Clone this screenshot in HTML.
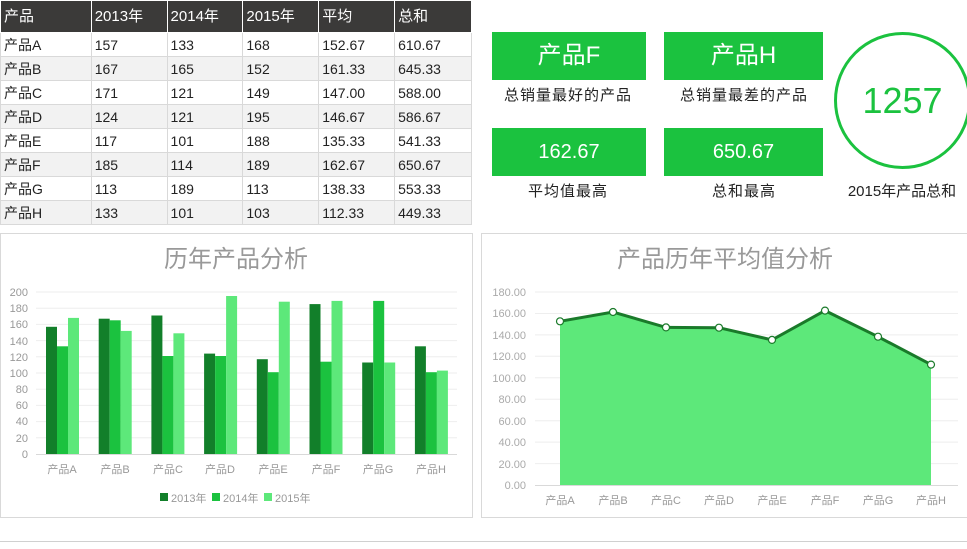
<!DOCTYPE html>
<html><head><meta charset="utf-8"><style>
*{margin:0;padding:0;box-sizing:border-box}
body{width:967px;height:549px;background:#fff;position:relative;overflow:hidden;font-family:"Liberation Sans","Noto Sans CJK SC",sans-serif}
table{position:absolute;left:0;top:0;border-collapse:collapse;width:472px}
td{height:24px;border:1px solid #d9d9d9;font-size:14px;color:#222;padding:0 0 0 3px;line-height:22px}
tr.h td{height:32px;background:#3b3a39;color:#fff;border-color:#fff;font-size:15px}
tr:nth-child(odd):not(.h) td{background:#f2f2f2}
.box{position:absolute;background:#1bc23f;color:#fff;text-align:center;width:154px;height:48px;line-height:48px}
.lab{position:absolute;text-align:center;font-size:15px;color:#222;width:180px;letter-spacing:1px}
</style></head><body>
<table>
<col style="width:91px"><col style="width:76px"><col style="width:76px"><col style="width:76px"><col style="width:76px"><col style="width:77px">
<tr class="h"><td>产品</td><td>2013年</td><td>2014年</td><td>2015年</td><td>平均</td><td>总和</td></tr>
<tr><td>产品A</td><td>157</td><td>133</td><td>168</td><td>152.67</td><td>610.67</td></tr>
<tr><td>产品B</td><td>167</td><td>165</td><td>152</td><td>161.33</td><td>645.33</td></tr>
<tr><td>产品C</td><td>171</td><td>121</td><td>149</td><td>147.00</td><td>588.00</td></tr>
<tr><td>产品D</td><td>124</td><td>121</td><td>195</td><td>146.67</td><td>586.67</td></tr>
<tr><td>产品E</td><td>117</td><td>101</td><td>188</td><td>135.33</td><td>541.33</td></tr>
<tr><td>产品F</td><td>185</td><td>114</td><td>189</td><td>162.67</td><td>650.67</td></tr>
<tr><td>产品G</td><td>113</td><td>189</td><td>113</td><td>138.33</td><td>553.33</td></tr>
<tr><td>产品H</td><td>133</td><td>101</td><td>103</td><td>112.33</td><td>449.33</td></tr>
</table>

<div class="box" style="left:492px;top:32px;font-size:24px">产品F</div>
<div class="box" style="left:664px;top:32px;font-size:24px;width:159px">产品H</div>
<div class="box" style="left:492px;top:128px;font-size:20px">162.67</div>
<div class="box" style="left:664px;top:128px;font-size:20px;width:159px">650.67</div>
<div class="lab" style="left:478px;top:84px">总销量最好的产品</div>
<div class="lab" style="left:654px;top:84px">总销量最差的产品</div>
<div class="lab" style="left:478px;top:180px">平均值最高</div>
<div class="lab" style="left:654px;top:180px">总和最高</div>
<div style="position:absolute;left:834px;top:32px;width:137px;height:137px;border:3px solid #1bc23f;border-radius:50%;text-align:center;line-height:131px;font-size:36px;color:#1bc23f">1257</div>
<div class="lab" style="left:812px;top:180px;letter-spacing:0">2015年产品总和</div>

<svg width="967" height="549" style="position:absolute;left:0;top:0" font-family="Liberation Sans,Noto Sans CJK SC,sans-serif">
<rect x="0.5" y="233.5" width="472" height="284" fill="none" stroke="#d9d9d9"/>
<rect x="481.5" y="233.5" width="490" height="284" fill="none" stroke="#d9d9d9"/>
<line x1="0" y1="541.5" x2="967" y2="541.5" stroke="#d0d0d0"/>
<text x="236" y="267" text-anchor="middle" font-size="24" fill="#999">历年产品分析</text>
<text x="725" y="267" text-anchor="middle" font-size="24" fill="#999">产品历年平均值分析</text>
<g stroke="#eee">
<line x1="36" x2="457" y1="292" y2="292"/><line x1="36" x2="457" y1="308.2" y2="308.2"/><line x1="36" x2="457" y1="324.4" y2="324.4"/><line x1="36" x2="457" y1="340.6" y2="340.6"/><line x1="36" x2="457" y1="356.8" y2="356.8"/><line x1="36" x2="457" y1="373" y2="373"/><line x1="36" x2="457" y1="389.2" y2="389.2"/><line x1="36" x2="457" y1="405.4" y2="405.4"/><line x1="36" x2="457" y1="421.6" y2="421.6"/><line x1="36" x2="457" y1="437.8" y2="437.8"/>
</g>
<line x1="36" x2="457" y1="454.5" y2="454.5" stroke="#d9d9d9"/>
<g font-size="11" fill="#999" text-anchor="end">
<text x="28" y="296">200</text><text x="28" y="312">180</text><text x="28" y="328">160</text><text x="28" y="345">140</text><text x="28" y="361">120</text><text x="28" y="377">100</text><text x="28" y="393">80</text><text x="28" y="409">60</text><text x="28" y="425">40</text><text x="28" y="442">20</text><text x="28" y="458">0</text>
</g>
<g fill="#127f2a">
<rect x="46" y="326.8" width="11" height="127.2"/><rect x="98.7" y="318.7" width="11" height="135.3"/><rect x="151.4" y="315.5" width="11" height="138.5"/><rect x="204.1" y="353.6" width="11" height="100.4"/><rect x="256.8" y="359.2" width="11" height="94.8"/><rect x="309.5" y="304.1" width="11" height="149.9"/><rect x="362.2" y="362.5" width="11" height="91.5"/><rect x="414.9" y="346.3" width="11" height="107.7"/>
</g>
<g fill="#1bc23f">
<rect x="57" y="346.3" width="11" height="107.7"/><rect x="109.7" y="320.3" width="11" height="133.7"/><rect x="162.4" y="356" width="11" height="98"/><rect x="215.1" y="356" width="11" height="98"/><rect x="267.8" y="372.2" width="11" height="81.8"/><rect x="320.5" y="361.7" width="11" height="92.3"/><rect x="373.2" y="300.9" width="11" height="153.1"/><rect x="425.9" y="372.2" width="11" height="81.8"/>
</g>
<g fill="#5de87a">
<rect x="68" y="317.9" width="11" height="136.1"/><rect x="120.7" y="330.9" width="11" height="123.1"/><rect x="173.4" y="333.3" width="11" height="120.7"/><rect x="226.1" y="296" width="11" height="158"/><rect x="278.8" y="301.7" width="11" height="152.3"/><rect x="331.5" y="300.9" width="11" height="153.1"/><rect x="384.2" y="362.5" width="11" height="91.5"/><rect x="436.9" y="370.6" width="11" height="83.4"/>
</g>
<g font-size="11" fill="#999" text-anchor="middle">
<text x="62" y="473">产品A</text><text x="115" y="473">产品B</text><text x="168" y="473">产品C</text><text x="220" y="473">产品D</text><text x="273" y="473">产品E</text><text x="326" y="473">产品F</text><text x="378" y="473">产品G</text><text x="431" y="473">产品H</text>
</g>
<rect x="160" y="493" width="8" height="8" fill="#127f2a"/><text x="171" y="502" font-size="11" fill="#999">2013年</text>
<rect x="212" y="493" width="8" height="8" fill="#1bc23f"/><text x="223" y="502" font-size="11" fill="#999">2014年</text>
<rect x="264" y="493" width="8" height="8" fill="#5de87a"/><text x="275" y="502" font-size="11" fill="#999">2015年</text>

<g stroke="#eee">
<line x1="535" x2="958" y1="292" y2="292"/><line x1="535" x2="958" y1="313.5" y2="313.5"/><line x1="535" x2="958" y1="334.9" y2="334.9"/><line x1="535" x2="958" y1="356.3" y2="356.3"/><line x1="535" x2="958" y1="377.8" y2="377.8"/><line x1="535" x2="958" y1="399.2" y2="399.2"/><line x1="535" x2="958" y1="420.7" y2="420.7"/><line x1="535" x2="958" y1="442.1" y2="442.1"/><line x1="535" x2="958" y1="463.6" y2="463.6"/>
</g>
<polygon points="560,321.3 613,312 666,327.4 719,327.7 772,339.9 825,310.6 878,336.7 931,364.6 931,485 560,485" fill="#5de87a"/>
<line x1="535" x2="958" y1="485.5" y2="485.5" stroke="#d9d9d9"/>
<polyline points="560,321.3 613,312 666,327.4 719,327.7 772,339.9 825,310.6 878,336.7 931,364.6" fill="none" stroke="#1a7a2a" stroke-width="3"/>
<g fill="#fff" stroke="#1a7a2a" stroke-width="1.2">
<circle cx="560" cy="321.3" r="3.5"/><circle cx="613" cy="312" r="3.5"/><circle cx="666" cy="327.4" r="3.5"/><circle cx="719" cy="327.7" r="3.5"/><circle cx="772" cy="339.9" r="3.5"/><circle cx="825" cy="310.6" r="3.5"/><circle cx="878" cy="336.7" r="3.5"/><circle cx="931" cy="364.6" r="3.5"/>
</g>
<g font-size="11" fill="#aaa" text-anchor="end">
<text x="526" y="296">180.00</text><text x="526" y="317">160.00</text><text x="526" y="339">140.00</text><text x="526" y="360">120.00</text><text x="526" y="382">100.00</text><text x="526" y="403">80.00</text><text x="526" y="425">60.00</text><text x="526" y="446">40.00</text><text x="526" y="468">20.00</text><text x="526" y="489">0.00</text>
</g>
<g font-size="11" fill="#999" text-anchor="middle">
<text x="560" y="504">产品A</text><text x="613" y="504">产品B</text><text x="666" y="504">产品C</text><text x="719" y="504">产品D</text><text x="772" y="504">产品E</text><text x="825" y="504">产品F</text><text x="878" y="504">产品G</text><text x="931" y="504">产品H</text>
</g>
</svg>
</body></html>
